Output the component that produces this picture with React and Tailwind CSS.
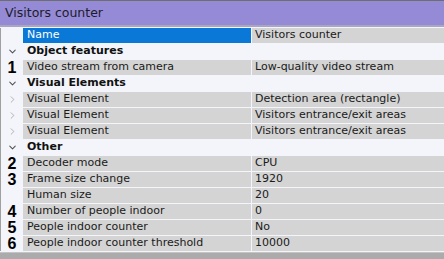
import { ChevronDown, ChevronRight } from 'lucide-react';

const rows = [
  { type: 'name', name: 'Name', value: 'Visitors counter' },
  { type: 'group', name: 'Object features' },
  { type: 'prop', num: '1', name: 'Video stream from camera', value: 'Low-quality video stream' },
  { type: 'group', name: 'Visual Elements' },
  { type: 'prop', arrow: true, name: 'Visual Element', value: 'Detection area (rectangle)' },
  { type: 'prop', arrow: true, name: 'Visual Element', value: 'Visitors entrance/exit areas' },
  { type: 'prop', arrow: true, name: 'Visual Element', value: 'Visitors entrance/exit areas' },
  { type: 'group', name: 'Other' },
  { type: 'prop', num: '2', name: 'Decoder mode', value: 'CPU' },
  { type: 'prop', num: '3', name: 'Frame size change', value: '1920' },
  { type: 'prop', name: 'Human size', value: '20' },
  { type: 'prop', num: '4', name: 'Number of people indoor', value: '0' },
  { type: 'prop', num: '5', name: 'People indoor counter', value: 'No' },
  { type: 'prop', num: '6', name: 'People indoor counter threshold', value: '10000' },
];

const nameFont = { fontFamily: '"DejaVu Sans", sans-serif' };

function Row({ row }) {
  if (row.type === 'group') {
    return (
      <div className="flex h-[15px] items-center">
        <div className="w-[22px] flex justify-center text-[#505050]">
          <ChevronDown size={11} strokeWidth={2.2} />
        </div>
        <span className="pl-[4px] text-[11px] font-bold text-[#111]">{row.name}</span>
      </div>
    );
  }
  const isName = row.type === 'name';
  return (
    <div className="flex h-[15px] items-stretch">
      <div className="w-[22px] flex items-center justify-center">
        {row.num && (
          <span
            className="text-[16px] font-bold leading-[15px] text-black"
            style={{ fontFamily: '"Liberation Sans", Arial, sans-serif' }}
          >
            {row.num}
          </span>
        )}
        {row.arrow && <ChevronRight size={11} strokeWidth={1.6} className="text-[#9a9a9a]" />}
      </div>
      <div
        className={`w-[228px] flex items-center pl-[4px] text-[11px] ${
          isName ? 'bg-[#0a78d7] text-white' : 'bg-[#d4d4d4] text-[#1a1a1a]'
        }`}
      >
        {row.name}
      </div>
      <div className="ml-px flex-1 flex items-center pl-[3px] bg-[#d4d4d4] text-[11px] text-[#1a1a1a]">
        {row.value}
      </div>
    </div>
  );
}

export default function App() {
  return (
    <div className="w-[444px] h-[259px] overflow-hidden bg-[#f3f5fa] flex flex-col" style={nameFont}>
      <div className="border-t border-[#6e6e6e] h-[25px] bg-[#958ad5] flex items-center pl-[5px] text-[12.5px] text-[#1c1c2a]">
        Visitors counter
      </div>
      <div className="h-[2px] bg-[#a9a6c2]" />
      <div className="h-px" />
      <div className="flex flex-col gap-px border-l border-[#a0a0a0]">
        {rows.map((row, i) => (
          <Row key={i} row={row} />
        ))}
      </div>
      <div className="mt-px flex-1 border-t border-[#c4c4c4] bg-[#ababab]" />
    </div>
  );
}
